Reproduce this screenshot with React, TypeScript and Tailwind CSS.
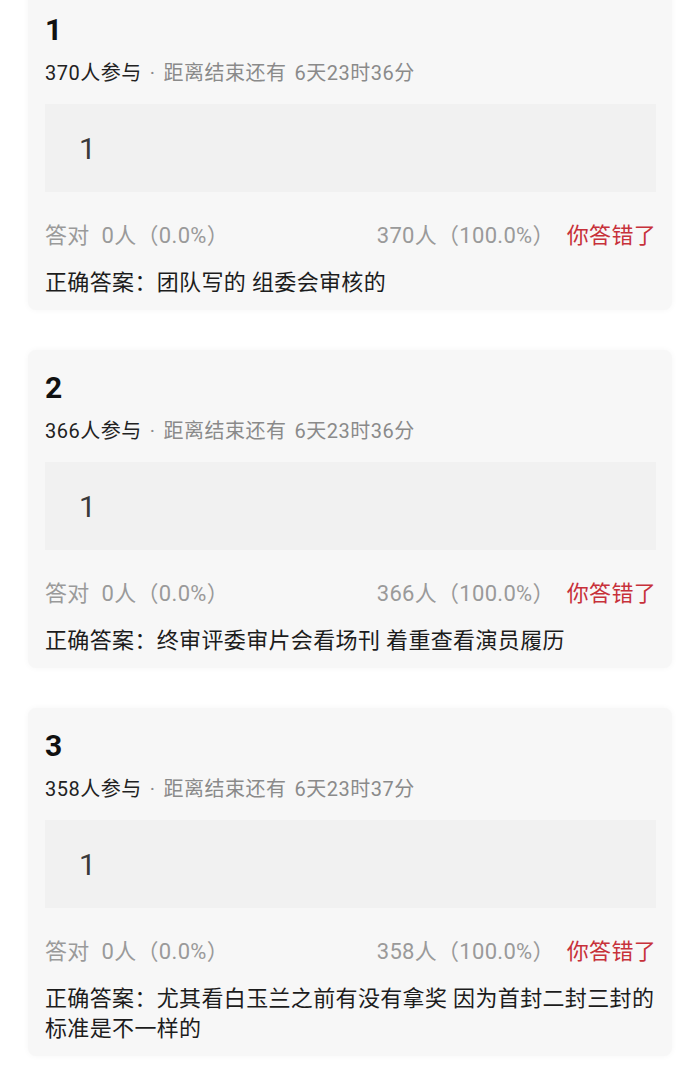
const questions = [
  {
    no: "1",
    total: 370,
    remain: "6天23时36分",
    answer: "团队写的 组委会审核的",
  },
  {
    no: "2",
    total: 366,
    remain: "6天23时36分",
    answer: "终审评委审片会看场刊 着重查看演员履历",
  },
  {
    no: "3",
    total: 358,
    remain: "6天23时37分",
    answer: "尤其看白玉兰之前有没有拿奖 因为首封二封三封的标准是不一样的",
  },
];

function QuestionCard({ q }: { q: (typeof questions)[number] }) {
  return (
    <div className="rounded-lg bg-[#f7f7f7] pt-5 pb-[12px] pl-[17px] pr-[14px] shadow-[0_0_6px_rgba(0,0,0,0.04)]">
      {/* Title */}
      <div className="text-[30px] font-bold leading-[36px] text-[#111]">{q.no}</div>

      {/* Meta */}
      <div className="mt-[11px] text-[20px] leading-[28px] tracking-[0.5px]">
        <span className="text-[#222]">{q.total}人参与</span>
        <span className="mx-[8px] text-[#8a8a8a]">·</span>
        <span className="text-[#8a8a8a]">距离结束还有</span>
        <span className="ml-[8px] text-[#8a8a8a]">{q.remain}</span>
      </div>

      {/* Option */}
      <div className="mt-[17px] mr-[2px] flex h-[88px] items-center bg-[#f1f1f1] pl-[34px]">
        <span className="text-[30px] font-normal text-[#3a3a3a]">1</span>
      </div>

      {/* Stats */}
      <div className="mt-[29px] mr-[2px] flex items-center justify-between text-[22px] leading-[30px] tracking-[0.3px] text-[#9a9a9a]">
        <div>
          <span>答对</span>
          <span className="ml-3">0人（0.0%）</span>
        </div>
        <div className="flex items-center">
          <span>{q.total}人（100.0%）</span>
          <span className="ml-[12px] text-[#c7313a]">你答错了</span>
        </div>
      </div>

      {/* Answer */}
      <div className="mt-[17px] text-[22px] leading-[30px] tracking-[0.35px] text-[#1c1c1c]">
        正确答案：{q.answer}
      </div>
    </div>
  );
}

export default function App() {
  return (
    <div
      className="min-h-[1080px] overflow-hidden bg-white px-[28px]"
      style={{ fontFamily: 'Roboto, "Noto Sans CJK SC", sans-serif' }}
    >
      <div className="-mt-2 flex flex-col gap-10">
        {questions.map((q) => (
          <QuestionCard key={q.no} q={q} />
        ))}
      </div>
    </div>
  );
}
